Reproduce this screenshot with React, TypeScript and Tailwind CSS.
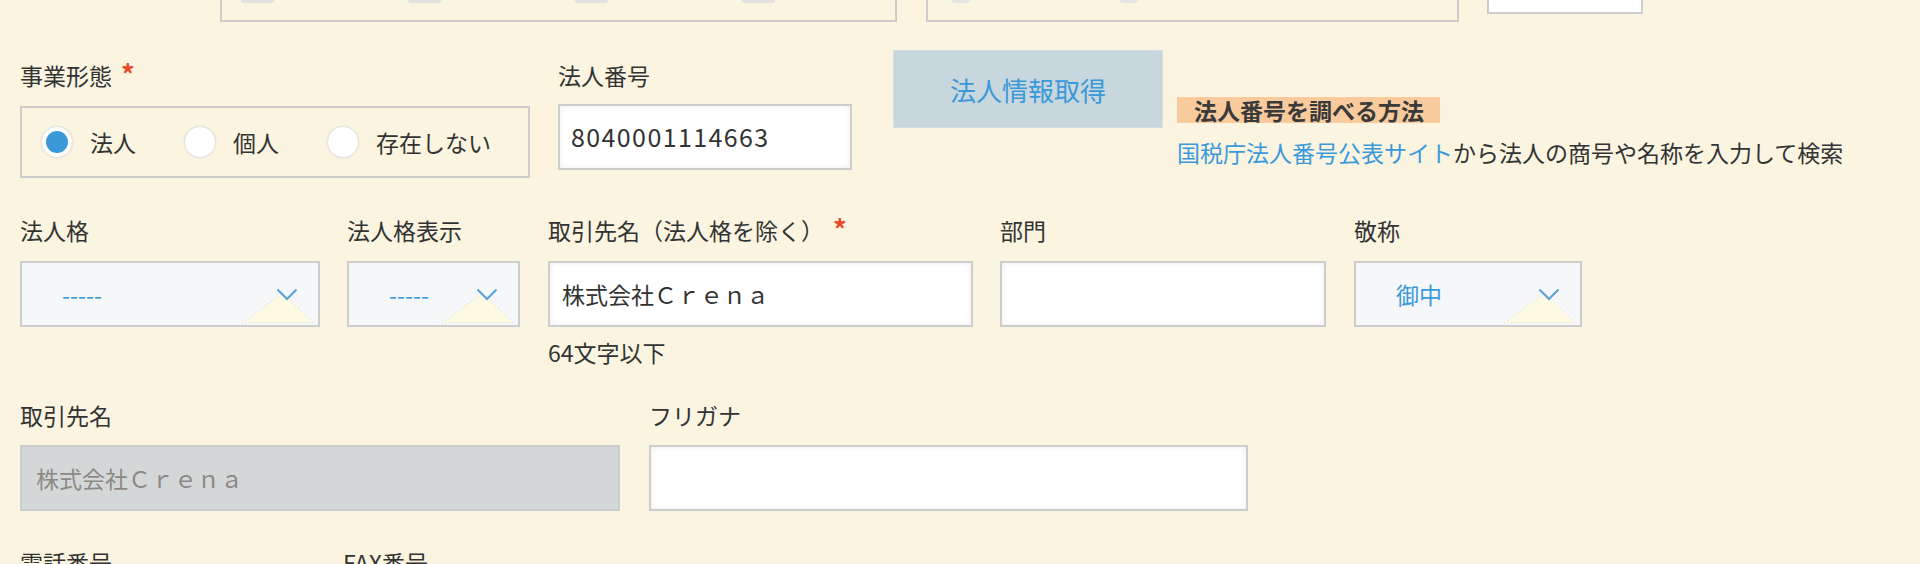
import { ReactNode } from 'react';

// corporate info form section (cropped view)

const inputBox =
  'h-[66px] border-2 border-[#cdcdcd] bg-white shadow-[inset_0_0_6px_rgba(0,0,0,0.07)] flex items-center';

function Required() {
  return <span className="ml-[9px] text-[27px] font-bold leading-none text-[#ea4a2a]">*</span>;
}

function Label({ children, required }: { children: ReactNode; required?: boolean }) {
  return (
    <div className="h-[32px] leading-[32px] whitespace-nowrap">
      {children}
      {required && <Required />}
    </div>
  );
}

function Radio({ label, checked }: { label: string; checked?: boolean }) {
  return (
    <label className="flex items-center gap-[17px]">
      <span className="flex h-[32px] w-[32px] items-center justify-center rounded-full border border-[#e2e2e2] bg-white shadow-[0_0_3px_rgba(0,0,0,0.08)]">
        {checked && <span className="h-[22px] w-[22px] rounded-full bg-[#3a9ad9]" />}
      </span>
      <span>{label}</span>
    </label>
  );
}

function Select({ value, width }: { value: string; width: string }) {
  return (
    <div
      className={`relative h-[66px] ${width} border-2 border-[#cdcdcd] bg-[#f6f7f9] flex items-center pl-[40px] text-[#3a9ad9]`}
    >
      <span className="relative z-10">{value}</span>
      <svg
        className="absolute bottom-[1px] right-[4px]"
        width="72"
        height="32"
        viewBox="0 0 72 32"
      >
        <polygon
          points="0,31 41,1 71,31"
          fill="#fdfae3"
          stroke="#d6d6d6"
          strokeWidth="1"
          strokeDasharray="1 3"
        />
      </svg>
      <svg
        className="absolute right-[20px] top-[25px]"
        width="22"
        height="13"
        viewBox="0 0 22 13"
      >
        <polyline
          points="1.5,1.5 11,11 20.5,1.5"
          fill="none"
          stroke="#5aa2d8"
          strokeWidth="2"
        />
      </svg>
    </div>
  );
}

export default function App() {
  return (
    <div className="h-[564px] w-[1920px] overflow-hidden bg-[#faf4e1] pl-5 font-['Noto_Sans_CJK_JP',sans-serif] text-[23px] text-[#333]">
      {/* ═══ top (cut off) row ═══ */}
      <div className="ml-[200px] flex h-[22px] items-start">
        <div className="flex h-[22px] w-[677px] gap-[134px] border-2 border-t-0 border-[#cdcdcd] pl-[19px]">
          {[0, 1, 2, 3].map((i) => (
            <span key={i} className="h-[3px] w-[33px] rounded-b-[3px] bg-[#e1e1e1]" />
          ))}
        </div>
        <div className="ml-[29px] flex h-[22px] w-[533px] gap-[150px] border-2 border-t-0 border-[#cdcdcd] pl-[24px]">
          {[0, 1].map((i) => (
            <span key={i} className="h-[3px] w-[18px] rounded-b-full bg-[#e4e4e4]" />
          ))}
        </div>
        <div className="ml-[28px] h-[14px] w-[156px] border-2 border-t-0 border-[#cdcdcd] bg-white" />
      </div>

      {/* ═══ 事業形態 / 法人番号 ═══ */}
      <div className="mt-[28px] flex items-start">
        <div className="w-[510px] pt-[9px]">
          <Label required>事業形態</Label>
          <div className="mt-[15px] flex h-[72px] items-center gap-[48px] border-2 border-[#cdcdcd] pl-[19px]">
            <Radio label="法人" checked />
            <Radio label="個人" />
            <Radio label="存在しない" />
          </div>
        </div>

        <div className="ml-[28px] w-[294px] pt-[9px]">
          <Label>法人番号</Label>
          <div className={`mt-[13px] ${inputBox} pl-[11px] text-[25px] tracking-[1.4px]`}>8040001114663</div>
        </div>

        <button className="ml-[41px] h-[78px] w-[270px] border border-[#d3dde2] bg-[#c8d6dd] text-[26px] text-[#3a9ad9]">
          法人情報取得
        </button>

        <div className="ml-[14px] pt-[43px]">
          <span className="inline-block h-[26px] bg-[#f8ca9c] pl-[17px] pr-[16px] font-bold leading-[26px] text-[#3a3a3a]">
            法人番号を調べる方法
          </span>
          <div className="mt-[8px] h-[32px] leading-[32px] whitespace-nowrap">
            <a className="text-[#3a9ad9]">国税庁法人番号公表サイト</a>
            から法人の商号や名称を入力して検索
          </div>
        </div>
      </div>

      {/* ═══ 法人格 / 取引先名 / 部門 / 敬称 ═══ */}
      <div className="mt-[36px] flex items-start">
        <div className="w-[300px]">
          <Label>法人格</Label>
          <div className="mt-[15px]">
            <Select value="-----" width="w-[300px]" />
          </div>
        </div>
        <div className="ml-[27px] w-[173px]">
          <Label>法人格表示</Label>
          <div className="mt-[15px]">
            <Select value="-----" width="w-[173px]" />
          </div>
        </div>
        <div className="ml-[28px] w-[425px]">
          <Label required>取引先名（法人格を除く）</Label>
          <div className={`mt-[15px] ${inputBox} pl-[12px]`}>株式会社Ｃｒｅｎａ</div>
          <div className="mt-[9px] h-[32px] leading-[32px]">64文字以下</div>
        </div>
        <div className="ml-[27px] w-[326px]">
          <Label>部門</Label>
          <div className={`mt-[15px] ${inputBox}`} />
        </div>
        <div className="ml-[28px] w-[228px]">
          <Label>敬称</Label>
          <div className="mt-[15px]">
            <Select value="御中" width="w-[228px]" />
          </div>
        </div>
      </div>

      {/* ═══ 取引先名 / フリガナ ═══ */}
      <div className="mt-[31px] flex items-start">
        <div className="w-[600px]">
          <Label>取引先名</Label>
          <div className="mt-[14px] flex h-[66px] items-center border-2 border-[#cacccd] bg-[#d4d7d8] pl-[14px] text-[#8c8984]">
            株式会社Ｃｒｅｎａ
          </div>
        </div>
        <div className="ml-[29px] w-[599px]">
          <Label>フリガナ</Label>
          <div className={`mt-[14px] ${inputBox}`} />
        </div>
      </div>

      {/* ═══ 電話番号 / FAX番号 ═══ */}
      <div className="mt-[35px] flex items-start">
        <div className="w-[323px]">
          <Label>電話番号</Label>
        </div>
        <div>
          <Label>FAX番号</Label>
        </div>
      </div>
    </div>
  );
}
